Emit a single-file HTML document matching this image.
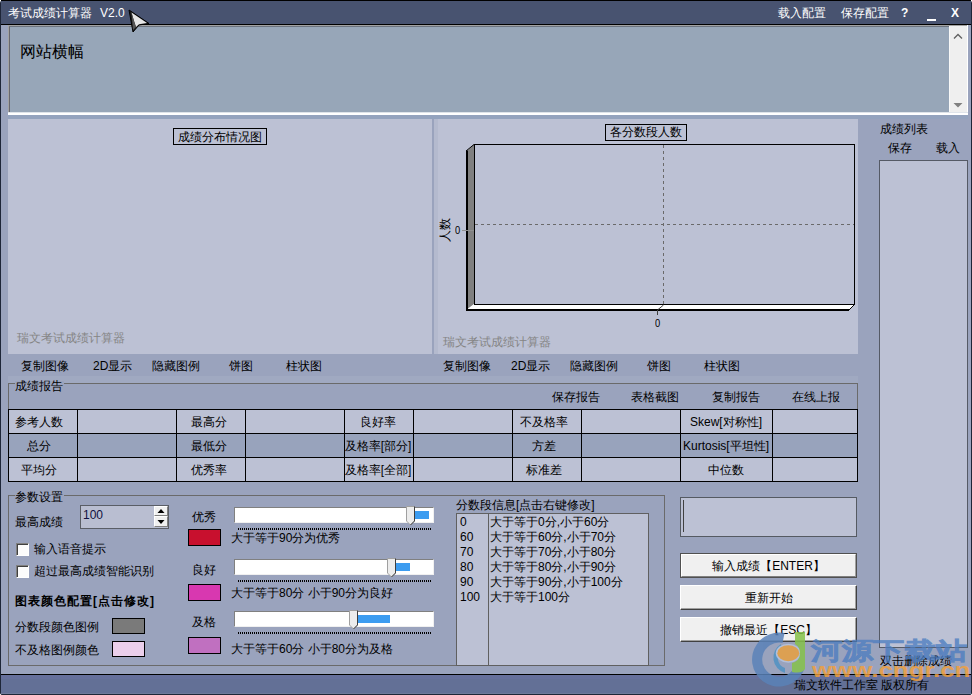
<!DOCTYPE html>
<html><head><meta charset="utf-8">
<style>
*{margin:0;padding:0;box-sizing:border-box}
html,body{width:972px;height:695px;overflow:hidden;background:#fff}
body{position:relative;font-family:"Liberation Sans",sans-serif;font-size:12px;line-height:12px;color:#000}
.a{position:absolute}
.t{position:absolute;white-space:nowrap;line-height:12px;height:12px}
#win{position:absolute;left:0;top:0;width:972px;height:695px;background:#9aa3bd;border:1px solid #1e2638;border-radius:3px 3px 2px 2px;overflow:hidden}
#title{left:1px;top:0;width:970px;height:25px;background:#485370;border-bottom:1px solid #000;border-top:1px solid #000}
.wt{color:#fff}
.chart{background:#bcc1d4}
.gray{color:#858585}
.grid{background:#000}
.cell{position:absolute;display:flex;align-items:center;justify-content:center}
.btn{position:absolute;background:#f0f0f0;border:1px solid #fff;border-right-color:#404040;border-bottom-color:#404040;box-shadow:inset -1px -1px 0 #a0a0a0;text-align:center}
</style></head>
<body>
<div id="win"></div>
<!-- title bar -->
<div class="a" id="title"></div>
<div class="t wt" style="left:8px;top:7px">考试成绩计算器</div>
<div class="t wt" style="left:100px;top:7px">V2.0</div>
<div class="t wt" style="left:778px;top:7px">载入配置</div>
<div class="t wt" style="left:841px;top:7px">保存配置</div>
<div class="t wt" style="left:901px;top:7px;font-weight:bold">?</div>
<div class="a" style="left:927px;top:19px;width:9px;height:2px;background:#fff"></div>
<div class="t wt" style="left:951px;top:7px;font-weight:bold">X</div>

<!-- banner -->
<div class="a" style="left:8px;top:25px;width:960px;height:88px;background:#97a6b8;border-left:1px solid #a2a2a2;border-top:1px solid #a2a2a2"></div><div class="a" style="left:9px;top:26px;width:1px;height:87px;background:#686870"></div><div class="a" style="left:9px;top:26px;width:940px;height:1px;background:#6c737e"></div>
<div class="t" style="left:20px;top:44px;font-size:16px;line-height:16px;height:16px">网站横幅</div>
<div class="a" style="left:949px;top:26px;width:18px;height:87px;background:#efefef;border-left:1px solid #f8f8f8"></div>
<svg class="a" style="left:949px;top:26px" width="18" height="87"><polyline points="5,12.5 9,8.5 13,12.5" fill="none" stroke="#606060" stroke-width="1.3"/><polygon points="4.5,77 13.5,77 9,81.5" fill="#808080"/></svg>
<div class="a" style="left:967px;top:25px;width:1px;height:88px;background:#fff"></div>
<div class="a" style="left:8px;top:112px;width:960px;height:1px;background:#dfe4ea"></div><div class="a" style="left:8px;top:113px;width:960px;height:2px;background:#fff"></div><div class="a" style="left:8px;top:115px;width:960px;height:4px;background:#94a3be"></div>

<!-- left chart -->
<div class="a chart" style="left:8px;top:119px;width:424px;height:235px"></div>
<div class="a" style="left:173px;top:128px;width:94px;height:17px;border:1px solid #000"></div>
<div class="t" style="left:178px;top:131px">成绩分布情况图</div>
<div class="t gray" style="left:17px;top:332px">瑞文考试成绩计算器</div>

<!-- right chart -->
<div class="a chart" style="left:434px;top:119px;width:424px;height:235px"></div><div class="a" style="left:434px;top:119px;width:4px;height:235px;background:#b4bace"></div>

<!-- right list panel -->
<div class="t" style="left:880px;top:123px">成绩列表</div>
<div class="t" style="left:888px;top:142px">保存</div>
<div class="t" style="left:936px;top:142px">载入</div>
<div class="a chart" style="left:879px;top:160px;width:89px;height:488px;border:1px solid #555a65"></div>
<div class="t" style="left:880px;top:655px">双击删除成绩</div>


<!-- right chart internals -->
<div class="a" style="left:605px;top:124px;width:82px;height:17px;border:1px solid #000"></div>
<div class="t" style="left:610px;top:126px">各分数段人数</div>
<svg class="a" style="left:434px;top:119px" width="424" height="235" viewBox="434 119 424 235">
  <polygon points="467,151 474,144 474,304 467,310" fill="#808080"/>
  <polygon points="466,310 474,304 855,304 849,310" fill="#fff"/>
  <line x1="467" y1="150.5" x2="467" y2="310" stroke="#000" stroke-width="2"/>
  <line x1="466" y1="310" x2="849" y2="310" stroke="#000" stroke-width="2"/>
  <line x1="466" y1="151" x2="474" y2="144.5" stroke="#000" stroke-width="1"/>
  <line x1="849" y1="310" x2="855" y2="304" stroke="#000" stroke-width="1"/>
  <rect x="474.5" y="144.5" width="380" height="160" fill="none" stroke="#000" stroke-width="1"/>
  <line x1="663.5" y1="145" x2="663.5" y2="304" stroke="#6a6a6a" stroke-dasharray="3,3"/>
  <line x1="475" y1="224.5" x2="854" y2="224.5" stroke="#6a6a6a" stroke-dasharray="3,3"/>
  <polyline points="663.5,305 657.5,310 657.5,315" fill="none" stroke="#404040"/>
  <line x1="462" y1="230.5" x2="474" y2="230.5" stroke="#909090"/>
</svg>
<div class="t" style="left:455px;top:224px;font-size:11px;transform:scaleX(0.85);transform-origin:0 0">0</div>
<div class="t" style="left:655px;top:317px;font-size:11px;transform:scaleX(0.85);transform-origin:0 0">0</div>
<div class="t" style="left:433px;top:224px;transform:rotate(-90deg);transform-origin:12px 6px">人数</div>
<div class="t gray" style="left:443px;top:336px">瑞文考试成绩计算器</div>

<!-- chart button rows -->
<div class="a" style="left:8px;top:376px;width:850px;height:7px;background:#a0a9c1"></div>
<div class="t" style="left:21px;top:360px">复制图像</div>
<div class="t" style="left:93px;top:360px">2D显示</div>
<div class="t" style="left:152px;top:360px">隐藏图例</div>
<div class="t" style="left:229px;top:360px">饼图</div>
<div class="t" style="left:286px;top:360px">柱状图</div>
<div class="t" style="left:443px;top:360px">复制图像</div>
<div class="t" style="left:511px;top:360px">2D显示</div>
<div class="t" style="left:570px;top:360px">隐藏图例</div>
<div class="t" style="left:647px;top:360px">饼图</div>
<div class="t" style="left:704px;top:360px">柱状图</div>

<!-- report group -->
<div class="a" style="left:8px;top:383px;width:850px;height:99px;border:1px solid #6a6a6a"></div>
<div class="a" style="left:15px;top:381px;width:49px;height:6px;background:#9aa3bd"></div>
<div class="t" style="left:15px;top:380px">成绩报告</div>
<div class="t" style="left:552px;top:391px">保存报告</div>
<div class="t" style="left:631px;top:391px">表格截图</div>
<div class="t" style="left:712px;top:391px">复制报告</div>
<div class="t" style="left:792px;top:391px">在线上报</div>

<!-- table -->
<div class="a" style="left:8px;top:409px;width:850px;height:24px;background:#bcc1d4"></div>
<div class="a" style="left:8px;top:433px;width:850px;height:24px;background:#98a3bc"></div>
<div class="a" style="left:8px;top:457px;width:850px;height:24px;background:#bcc1d4"></div>
<div class="a grid" style="left:8px;top:409px;width:850px;height:1px"></div>
<div class="a grid" style="left:8px;top:433px;width:850px;height:1px"></div>
<div class="a grid" style="left:8px;top:457px;width:850px;height:1px"></div>
<div class="a grid" style="left:8px;top:481px;width:850px;height:1px"></div>
<div class="a grid" style="left:8px;top:409px;width:1px;height:73px"></div>
<div class="a grid" style="left:77px;top:409px;width:1px;height:73px"></div>
<div class="a grid" style="left:176px;top:409px;width:1px;height:73px"></div>
<div class="a grid" style="left:245px;top:409px;width:1px;height:73px"></div>
<div class="a grid" style="left:344px;top:409px;width:1px;height:73px"></div>
<div class="a grid" style="left:413px;top:409px;width:1px;height:73px"></div>
<div class="a grid" style="left:512px;top:409px;width:1px;height:73px"></div>
<div class="a grid" style="left:581px;top:409px;width:1px;height:73px"></div>
<div class="a grid" style="left:680px;top:409px;width:1px;height:73px"></div>
<div class="a grid" style="left:772px;top:409px;width:1px;height:73px"></div>
<div class="a grid" style="left:857px;top:409px;width:1px;height:73px"></div>
<div class="t" style="left:-21px;width:120px;text-align:center;top:416px">参考人数</div>
<div class="t" style="left:149px;width:120px;text-align:center;top:416px">最高分</div>
<div class="t" style="left:318px;width:120px;text-align:center;top:416px">良好率</div>
<div class="t" style="left:484px;width:120px;text-align:center;top:416px">不及格率</div>
<div class="t" style="left:666px;width:120px;text-align:center;top:416px">Skew[对称性]</div>
<div class="t" style="left:-21px;width:120px;text-align:center;top:440px">总分</div>
<div class="t" style="left:149px;width:120px;text-align:center;top:440px">最低分</div>
<div class="t" style="left:318px;width:120px;text-align:center;top:440px">及格率[部分]</div>
<div class="t" style="left:484px;width:120px;text-align:center;top:440px">方差</div>
<div class="t" style="left:666px;width:120px;text-align:center;top:440px">Kurtosis[平坦性]</div>
<div class="t" style="left:-21px;width:120px;text-align:center;top:464px">平均分</div>
<div class="t" style="left:149px;width:120px;text-align:center;top:464px">优秀率</div>
<div class="t" style="left:318px;width:120px;text-align:center;top:464px">及格率[全部]</div>
<div class="t" style="left:484px;width:120px;text-align:center;top:464px">标准差</div>
<div class="t" style="left:666px;width:120px;text-align:center;top:464px">中位数</div>

<!-- params group -->
<div class="a" style="left:8px;top:495px;width:657px;height:171px;border:1px solid #6a6a6a"></div>
<div class="a" style="left:15px;top:493px;width:49px;height:5px;background:#9aa3bd"></div>
<div class="t" style="left:15px;top:491px">参数设置</div>
<div class="t" style="left:15px;top:516px">最高成绩</div>
<div class="a" style="left:80px;top:505px;width:89px;height:24px;background:#b9bed1;border:1px solid #5a5e66"></div>
<div class="t" style="left:83px;top:509px;color:#101040">100</div>
<div class="a" style="left:154px;top:506px;width:14px;height:10px;background:#f0f0f0;border:1px solid #fff;border-right-color:#808080;border-bottom-color:#808080"></div>
<div class="a" style="left:154px;top:516px;width:14px;height:11px;background:#f0f0f0;border:1px solid #fff;border-right-color:#808080;border-bottom-color:#808080"></div>
<svg class="a" style="left:154px;top:506px" width="14" height="22"><polygon points="3.5,7 10.5,7 7,3" fill="#000"/><polygon points="3.5,14 10.5,14 7,18" fill="#000"/></svg>
<div class="a" style="left:16px;top:543px;width:13px;height:13px;background:#fcfcfc;border:1px solid #808080;border-right-color:#fff;border-bottom-color:#fff;box-shadow:inset 1px 1px 0 #404040"></div>
<div class="t" style="left:34px;top:543px">输入语音提示</div>
<div class="a" style="left:16px;top:565px;width:13px;height:13px;background:#fcfcfc;border:1px solid #808080;border-right-color:#fff;border-bottom-color:#fff;box-shadow:inset 1px 1px 0 #404040"></div>
<div class="t" style="left:34px;top:565px">超过最高成绩智能识别</div>
<div class="t" style="left:15px;top:595px;font-weight:bold;letter-spacing:1px">图表颜色配置[点击修改]</div>
<div class="t" style="left:15px;top:621px">分数段颜色图例</div>
<div class="a" style="left:112px;top:618px;width:33px;height:16px;background:#7a7a7a;border:1px solid #000"></div>
<div class="t" style="left:15px;top:644px">不及格图例颜色</div>
<div class="a" style="left:112px;top:641px;width:33px;height:16px;background:#ebcfeb;border:1px solid #000"></div>

<div class="t" style="left:192px;top:511px">优秀</div>
<div class="a" style="left:188px;top:529px;width:33px;height:17px;background:#c8102e;border:1px solid #000"></div>
<div class="t" style="left:231px;top:532px">大于等于90分为优秀</div>
<div class="t" style="left:192px;top:564px">良好</div>
<div class="a" style="left:188px;top:584px;width:33px;height:17px;background:#d838b0;border:1px solid #000"></div>
<div class="t" style="left:231px;top:587px">大于等于80分 小于90分为良好</div>
<div class="t" style="left:192px;top:616px">及格</div>
<div class="a" style="left:188px;top:637px;width:33px;height:17px;background:#c070c0;border:1px solid #000"></div>
<div class="t" style="left:231px;top:643px">大于等于60分 小于80分为及格</div>
<div class="a" style="left:234px;top:507px;width:200px;height:16px;background:#fff;border:1px solid #808080;border-right-color:#f0f0f0;border-bottom-color:#f0f0f0"></div>
<div class="a" style="left:415px;top:511px;width:14px;height:8px;background:#3c9cf0"></div>
<svg class="a" style="left:406px;top:506px" width="9" height="20"><polygon points="0.5,0.5 8.5,0.5 8.5,15 4.5,19 0.5,15" fill="#ececec" stroke="#a0a0a0"/><polyline points="8.5,0.5 8.5,15 4.5,19" fill="none" stroke="#404040"/></svg>
<div class="a" style="left:238px;top:528px;width:193px;height:2px;background:repeating-linear-gradient(90deg,#000 0 1px,transparent 1px 2px)"></div>
<div class="a" style="left:234px;top:559px;width:200px;height:16px;background:#fff;border:1px solid #808080;border-right-color:#f0f0f0;border-bottom-color:#f0f0f0"></div>
<div class="a" style="left:396px;top:563px;width:14px;height:8px;background:#3c9cf0"></div>
<svg class="a" style="left:387px;top:558px" width="9" height="20"><polygon points="0.5,0.5 8.5,0.5 8.5,15 4.5,19 0.5,15" fill="#ececec" stroke="#a0a0a0"/><polyline points="8.5,0.5 8.5,15 4.5,19" fill="none" stroke="#404040"/></svg>
<div class="a" style="left:238px;top:580px;width:193px;height:2px;background:repeating-linear-gradient(90deg,#000 0 1px,transparent 1px 2px)"></div>
<div class="a" style="left:234px;top:611px;width:200px;height:16px;background:#fff;border:1px solid #808080;border-right-color:#f0f0f0;border-bottom-color:#f0f0f0"></div>
<div class="a" style="left:358px;top:615px;width:32px;height:8px;background:#3c9cf0"></div>
<svg class="a" style="left:349px;top:610px" width="9" height="20"><polygon points="0.5,0.5 8.5,0.5 8.5,15 4.5,19 0.5,15" fill="#ececec" stroke="#a0a0a0"/><polyline points="8.5,0.5 8.5,15 4.5,19" fill="none" stroke="#404040"/></svg>
<div class="a" style="left:238px;top:632px;width:193px;height:2px;background:repeating-linear-gradient(90deg,#000 0 1px,transparent 1px 2px)"></div>

<!-- score segment list -->
<div class="t" style="left:456px;top:499px">分数段信息[点击右键修改]</div>
<div class="a chart" style="left:456px;top:513px;width:193px;height:153px;border:1px solid #606060"></div>
<div class="a" style="left:488px;top:514px;width:1px;height:151px;background:#606060"></div>
<div class="t" style="left:460px;top:516px">0</div><div class="t" style="left:490px;top:516px">大于等于0分,小于60分</div>
<div class="t" style="left:460px;top:531px">60</div><div class="t" style="left:490px;top:531px">大于等于60分,小于70分</div>
<div class="t" style="left:460px;top:546px">70</div><div class="t" style="left:490px;top:546px">大于等于70分,小于80分</div>
<div class="t" style="left:460px;top:561px">80</div><div class="t" style="left:490px;top:561px">大于等于80分,小于90分</div>
<div class="t" style="left:460px;top:576px">90</div><div class="t" style="left:490px;top:576px">大于等于90分,小于100分</div>
<div class="t" style="left:460px;top:591px">100</div><div class="t" style="left:490px;top:591px">大于等于100分</div>

<!-- right buttons -->
<div class="a chart" style="left:680px;top:497px;width:177px;height:40px;border:1px solid #555a62"></div>
<div class="a" style="left:683px;top:500px;width:1px;height:32px;background:#404040"></div>
<div class="a" style="left:680px;top:553px;width:177px;height:25px;border:1px solid #505050;background:#f0f0f0"></div><div class="a" style="left:681px;top:554px;width:175px;height:23px;border:1px solid #fff;border-right-color:#a0a0a0;border-bottom-color:#808080"></div>
<div class="t" style="left:680px;top:560px;width:177px;text-align:center">输入成绩【ENTER】</div>
<div class="btn" style="left:680px;top:585px;width:177px;height:25px"></div>
<div class="t" style="left:680px;top:592px;width:177px;text-align:center">重新开始</div>
<div class="btn" style="left:680px;top:617px;width:177px;height:25px"></div>
<div class="t" style="left:680px;top:624px;width:177px;text-align:center">撤销最近【ESC】</div>

<!-- bottom bar -->

<div class="a" style="left:1px;top:674px;width:970px;height:20px;background:#637096;border-top:1px solid #000"></div><div class="a" style="left:1px;top:675px;width:970px;height:4px;background:#66709c"></div><div class="a" style="left:1px;top:693px;width:970px;height:1px;background:#6f7a9a"></div>
<div class="t" style="left:794px;top:679px">瑞文软件工作室 版权所有</div>

<!-- watermark -->
<svg class="a" style="left:745px;top:625px" width="227" height="70">
 <g opacity="0.85">
  <path d="M39.6,8.1 A27,27 0 1 0 60,42 L50.5,39.5 A17,17 0 1 1 37.5,17.9 Z" fill="#5a82b8"/>
  <path d="M36,19 A16,16 0 0 0 40,48 L40,43 A11,11 0 0 1 37,24 Z" fill="#4f92c4"/>
  <ellipse cx="43.3" cy="28.2" rx="12.5" ry="9.5" fill="#b6c4e0"/>
  <ellipse cx="43.3" cy="28.2" rx="11" ry="8" fill="#e8a040"/>
  <path d="M50,7 L60,7 L60,44 Q57,49 47,47 L47,38 Q55,36 55,28 Q55,22 50,19 Z" fill="#86c24a"/>
 </g>
</svg>
<div class="t" style="left:811px;top:639px;font-size:24px;line-height:24px;height:24px;font-weight:bold;color:#4278c0;opacity:.75;-webkit-text-stroke:0.6px #4a7cc0;transform:scaleX(1.3);transform-origin:0 0">河源下载站</div>
<div class="t" style="left:812px;top:659px;font-size:21px;line-height:21px;height:21px;font-weight:bold;color:#f4a038;opacity:.8;transform:scaleX(1.23);transform-origin:0 0">www.cngr.cn</div>
<!-- cursor -->
<svg class="a" style="left:125px;top:6px" width="30" height="30"><polygon points="4,4 24,17.5 14,19 8,26" fill="#1a1a1a" stroke="#000" stroke-width="1"/><polygon points="6.5,6.5 22,17 14,18.2 11,21 9,15" fill="#e6e6e6"/><polygon points="6.5,6.5 9,15 11,21 8,24" fill="#555"/></svg>
</body></html>
